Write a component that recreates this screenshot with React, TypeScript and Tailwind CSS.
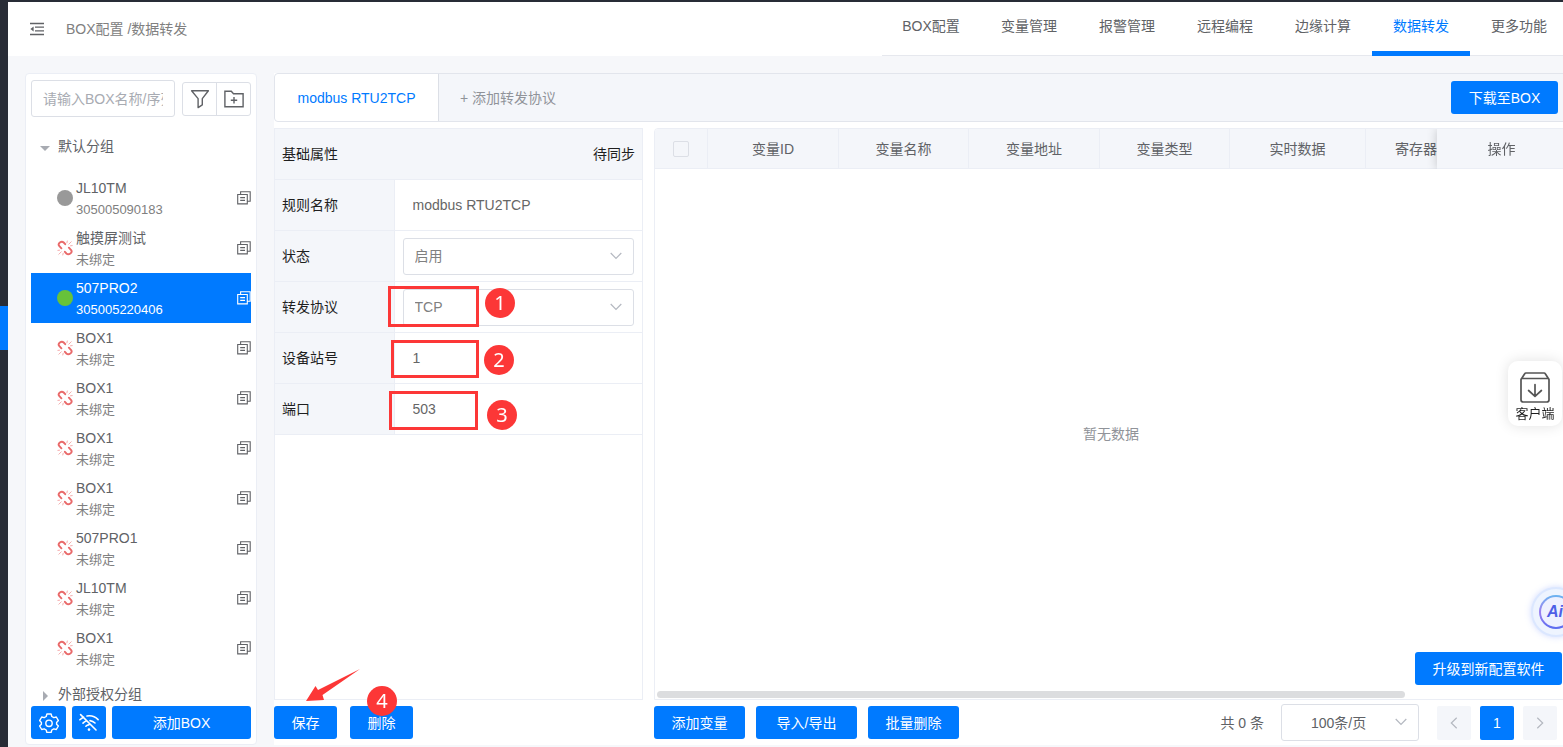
import React, { FunctionComponent, ReactNode } from "react";

const NAV_ITEMS = ["BOX配置", "变量管理", "报警管理", "远程编程", "边缘计算", "数据转发", "更多功能"];

type BoxStatus = "offline" | "online" | "unbound";

interface Box {
  name: string;
  code: string;
  status: BoxStatus;
}

const BOXES: Box[] = [
  { name: "JL10TM", code: "305005090183", status: "offline" },
  { name: "触摸屏测试", code: "未绑定", status: "unbound" },
  { name: "507PRO2", code: "305005220406", status: "online" },
  { name: "BOX1", code: "未绑定", status: "unbound" },
  { name: "BOX1", code: "未绑定", status: "unbound" },
  { name: "BOX1", code: "未绑定", status: "unbound" },
  { name: "BOX1", code: "未绑定", status: "unbound" },
  { name: "507PRO1", code: "未绑定", status: "unbound" },
  { name: "JL10TM", code: "未绑定", status: "unbound" },
  { name: "BOX1", code: "未绑定", status: "unbound" },
];

const FoldIcon = () => (
  <svg className="h-3.5 w-3.5" viewBox="0 0 14 14" fill="none" stroke="#606266" strokeWidth="1.3">
    <path d="M0 1.5h14M5 5.2h9M5 8.8h9M0 12.5h14" />
    <path d="M3.6 4.6v4.8L.4 7z" fill="#606266" stroke="none" />
  </svg>
);

const FilterIcon = () => (
  <svg className="h-5 w-5" viewBox="0 0 20 20" fill="none" stroke="#606266" strokeWidth="1.4" strokeLinejoin="round">
    <path d="M1.6 1.8h16.8L12.3 9.6v6.2l-4.2 2.8V9.6z" />
  </svg>
);

const FolderAddIcon = () => (
  <svg className="h-5 w-5" viewBox="0 0 20 20" fill="none" stroke="#606266" strokeWidth="1.4">
    <path d="M.9 2.3h6.4l2.2 2.4h9.6v13H.9zM10 8v6.4M6.8 11.2h6.4" />
  </svg>
);

const CopyIcon = ({ color }: { color: string }) => (
  <svg className="h-3.5 w-3.5" viewBox="0 0 14 14" fill="none" stroke={color} strokeWidth="1.1">
    <path d="M.7 3.5h9.6v9.4H.7zM3.6 3.4V.8h9.6v9.4h-2.8M3.2 6.6h4.8M3.2 9.4h4.8" />
  </svg>
);

const BrokenLinkIcon = () => (
  <svg className="h-4 w-4" viewBox="0 0 16 16" fill="none" stroke="#e96a6a" strokeLinecap="round">
    <path d="M8.2 4.2 6.700 2.500C4.400.300.300 3.400 2.200 6l2.200 2.300" strokeWidth="1.900" />
    <path d="M7.900 11.800l1.500 1.700c2.300 2.200 6.600-.9 4.700-3.500L11.900 7.700" strokeWidth="1.900" />
    <path d="M10.300 1 9.900 2.800M14.200 1.800l-2.400 2.400M15.200 5.600l-1.700.2M5.800 15l.4-1.800M1.900 14.200l2.400-2.400M.9 10.400l1.700-.2" stroke="#f3a3a3" strokeWidth=".9" />
  </svg>
);

const GearIcon = () => (
  <svg className="h-5 w-5" viewBox="0 0 20 20" fill="none" stroke="#fff" strokeWidth="1.4" strokeLinejoin="round">
    <path d="M7.900 1h4.200l.7 2.500 2 1.100 2.500-.6 2.100 3.600L17.600 9.400v1.800l1.800 1.800-2.100 3.500-2.500-.6-2 1.100-.7 2.500H7.900l-.7-2.500-2-1.100-2.500.6L.600 13l1.800-1.800V9.400L.600 7.600 2.700 4l2.500.6 2-1.100z" />
    <circle cx="10" cy="10.300" r="3.200" />
  </svg>
);

const WifiOffIcon = () => (
  <svg className="h-5 w-5" viewBox="0 0 20 20" fill="none" stroke="#fff" strokeWidth="1.6" strokeLinecap="round">
    <path d="M1.600 1.600 17 17M.9 6.800C2 5.700 3.300 4.800 4.600 4.200M8 3c4-.7 8.200.6 11.100 3.600M4 10.100c.9-.9 2-1.600 3.200-2M11 7.600c1.900.3 3.600 1.100 5 2.400M6.900 13.200c.8-.8 1.800-1.200 2.900-1.300" />
    <circle cx="10" cy="16.600" r="1.300" fill="#fff" stroke="none" />
  </svg>
);

const ClientIcon = () => (
  <svg className="h-8 w-8" viewBox="0 0 32 32" fill="none" stroke="#555" strokeWidth="1.700" strokeLinecap="round" strokeLinejoin="round">
    <path d="M2 7.500v20.200c0 1.600.8 2.300 2.300 2.300h23.400c1.600 0 2.300-.7 2.300-2.300V7.500L26.300 1.700c-.3-.5-.6-.7-1.200-.7H6.900c-.6 0-.9.200-1.200.7zM2.400 6.500h27.200M16 12.500V24M9.600 18.500 16 24.300l6.400-5.800" />
  </svg>
);

const Chevron = ({ d }: { d: string }) => (
  <svg className="h-3 w-3" viewBox="0 0 12 12" fill="none" stroke="#b4b8c0" strokeWidth="1.200">
    <path d={d} />
  </svg>
);

const CHEVRON_DOWN = "M.7 3 6 8.400 11.300 3";
const CHEVRON_LEFT = "M8.700.700 3.300 6l5.400 5.300";
const CHEVRON_RIGHT = "M3.300.700 8.700 6l-5.400 5.300";

const StatusIcon = ({ status }: { status: BoxStatus }) => {
  if (status === "unbound") return <BrokenLinkIcon />;
  return <span className={`h-4 w-4 rounded-full ${status === "online" ? "bg-[#67c23a]" : "bg-[#999]"}`} />;
};

const PrimaryButton = ({ children, className = "", label }: { children: ReactNode; className?: string; label?: string }) => (
  <button
    type="button"
    aria-label={label}
    className={`flex h-[33px] items-center justify-center rounded-[3px] bg-[#007aff] text-white ${className}`}
  >
    {children}
  </button>
);

const Header = () => (
  <header className="flex h-[54px] shrink-0 bg-white">
    <div className="flex items-center pl-[22px]">
      <button type="button" aria-label="收起菜单">
        <FoldIcon />
      </button>
      <span className="ml-[22px] text-[#808080]">BOX配置 /数据转发</span>
    </div>
    <nav className="-mr-[5px] ml-auto flex border-b border-[#e6e8ee]">
      {NAV_ITEMS.map((item) => {
        const active = item === "数据转发";
        return (
          <a
            key={item}
            href="#"
            className={`-mb-px flex w-[98px] shrink-0 justify-center border-b-[5px] pt-3.5 ${
              active ? "border-[#007aff] text-[#007aff]" : "border-transparent text-[#606266]"
            }`}
          >
            {item}
          </a>
        );
      })}
    </nav>
  </header>
);

const BoxRow: FunctionComponent<{ box: Box }> = ({ box }) => {
  const selected = box.status === "online";
  return (
    <li className={`flex h-[50px] items-center pl-[26px] ${selected ? "bg-[#007aff] text-white" : "text-[#606266]"}`}>
      <StatusIcon status={box.status} />
      <div className="ml-[3px] flex-1">
        <div className="leading-[22px]">{box.name}</div>
        <div className={`text-[13px] leading-[21px] ${selected ? "" : "text-[#808080]"}`}>{box.code}</div>
      </div>
      <button type="button" aria-label="复制">
        <CopyIcon color={selected ? "#fff" : "#606266"} />
      </button>
    </li>
  );
};

const Sidebar = () => (
  <aside className="flex w-[232px] shrink-0 flex-col rounded border border-[#ebeef5] bg-white px-[5px] pb-[5px]">
    <div className="mt-1.5 flex items-center justify-between">
      <input
        type="text"
        aria-label="搜索BOX"
        placeholder="请输入BOX名称/序列号"
        className="h-[37px] w-36 rounded-[3px] border border-[#dcdfe6] px-[11px] placeholder:text-[#a8abb2]"
      />
      <div className="flex h-[34px] rounded-[3px] border border-[#dcdfe6]">
        <button type="button" aria-label="筛选" className="flex w-[34px] items-center justify-center border-r border-[#dcdfe6]">
          <FilterIcon />
        </button>
        <button type="button" aria-label="新建分组" className="flex w-[33px] items-center justify-center">
          <FolderAddIcon />
        </button>
      </div>
    </div>
    <div className="min-h-0 flex-1 overflow-hidden">
      <div className="mt-[18px] flex h-[22px] items-center pl-[9px] text-[#606266]">
        <span className="mt-1 mr-2 border-x-[5px] border-t-[5px] border-x-transparent border-t-[#a8abb2]" />
        默认分组
      </div>
      <ul className="mt-4">
        {BOXES.map((box, index) => (
          <BoxRow key={index} box={box} />
        ))}
      </ul>
      <div className="mt-2.5 flex h-[22px] items-center pl-3 text-[#606266]">
        <span className="mt-1 mr-2.5 border-y-[5px] border-l-[5px] border-y-transparent border-l-[#a8abb2]" />
        外部授权分组
      </div>
    </div>
    <div className="flex gap-1.5">
      <PrimaryButton className="w-[35px]" label="设置">
        <GearIcon />
      </PrimaryButton>
      <PrimaryButton className="w-[34px]" label="离线">
        <WifiOffIcon />
      </PrimaryButton>
      <PrimaryButton className="flex-1">添加BOX</PrimaryButton>
    </div>
  </aside>
);

const SelectField = ({ id, value }: { id: string; value: string }) => (
  <div className="relative mx-2">
    <select id={id} className="h-[37px] w-full appearance-none rounded-[3px] border border-[#dcdfe6] bg-white px-[11px] text-[#808080]">
      <option>{value}</option>
    </select>
    <span className="pointer-events-none absolute top-3 right-3">
      <Chevron d={CHEVRON_DOWN} />
    </span>
  </div>
);

const TextField = ({ id, value }: { id: string; value: string }) => (
  <input id={id} type="text" defaultValue={value} className="h-9 w-full px-[18px] text-[#666]" />
);

const FIELDS = [
  { id: "rule-name", label: "规则名称", value: "modbus RTU2TCP", select: false },
  { id: "state", label: "状态", value: "启用", select: true },
  { id: "protocol", label: "转发协议", value: "TCP", select: true },
  { id: "station", label: "设备站号", value: "1", select: false },
  { id: "port", label: "端口", value: "503", select: false },
];

const PropertyPanel = () => (
  <div className="flex w-[369px] shrink-0 flex-col">
    <div className="flex-1 border border-[#ebeef5]">
      <div className="flex h-[50px] items-center justify-between bg-[#f4f6fa] px-[7px] text-[#1f1f1f]">
        <span>基础属性</span>
        <span>待同步</span>
      </div>
      <table className="w-full table-fixed border-collapse">
        <tbody>
          {FIELDS.map((field) => (
            <tr key={field.id} className="h-[51px] border-y border-[#ebeef5]">
              <th scope="row" className="w-[119px] border-r border-[#ebeef5] bg-[#f4f6fa] p-0 pl-[7px] text-left font-normal text-[#1f1f1f]">
                <label htmlFor={field.id}>{field.label}</label>
              </th>
              <td className="p-0">
                {field.select ? <SelectField id={field.id} value={field.value} /> : <TextField id={field.id} value={field.value} />}
              </td>
            </tr>
          ))}
        </tbody>
      </table>
    </div>
    <div className="mt-1.5 flex gap-[13px]">
      <PrimaryButton className="w-[63px]">保存</PrimaryButton>
      <PrimaryButton className="w-[63px]">删除</PrimaryButton>
    </div>
  </div>
);

const VariablePanel = () => (
  <div className="flex min-w-0 flex-1 flex-col">
    <div className="flex min-h-0 flex-1 flex-col overflow-hidden rounded-tl border border-[#ebeef5]">
      <div className="overflow-hidden">
        <table className="w-[1111px] table-fixed border-separate border-spacing-0 text-[#606266]">
          <thead>
            <tr className="h-10 bg-[#f4f6fa] *:border-r *:border-b *:border-[#ebeef5] *:p-0 *:font-normal">
              <th className="w-[53px]">
                <input
                  type="checkbox"
                  aria-label="全选"
                  className="mx-auto block h-4 w-4 appearance-none rounded-[2px] border border-[#dcdfe6]"
                />
              </th>
              <th className="w-[131px]">变量ID</th>
              <th className="w-[130px]">变量名称</th>
              <th className="w-[131px]">变量地址</th>
              <th className="w-[130px]">变量类型</th>
              <th className="w-[136px]">实时数据</th>
              <th className="w-[270px] text-left">
                <span className="pl-[29px]">寄存器</span>
              </th>
              <th className="sticky right-0 w-[130px] bg-[#f4f6fa] shadow-[0_0_10px_rgba(0,0,0,0.2)]">操作</th>
            </tr>
          </thead>
        </table>
      </div>
      <div className="flex flex-1 items-center justify-center pt-2 text-[#909399]">暂无数据</div>
      <div className="mb-px ml-0.5 h-[7px] w-[82%] rounded-full bg-[#dcdddf]" />
    </div>
    <div className="mt-1.5 flex h-[33px] items-center">
      <div className="flex gap-[11px]">
        <PrimaryButton className="w-[91px]">添加变量</PrimaryButton>
        <PrimaryButton className="w-[101px]">导入/导出</PrimaryButton>
        <PrimaryButton className="w-[91px]">批量删除</PrimaryButton>
      </div>
      <div className="mr-[11px] ml-auto flex items-center text-[#606266]">
        <span>共 0 条</span>
        <div className="relative ml-[17px]">
          <select aria-label="每页条数" className="h-[37px] w-[138px] appearance-none rounded-[3px] border border-[#dcdfe6] bg-white pl-[29px]">
            <option>100条/页</option>
          </select>
          <span className="pointer-events-none absolute top-3 right-3">
            <Chevron d={CHEVRON_DOWN} />
          </span>
        </div>
        <div className="ml-[18px] flex gap-[9px]">
          <button type="button" aria-label="上一页" className="flex h-[34px] w-[34px] items-center justify-center rounded-[2px] bg-[#f4f6fa]">
            <Chevron d={CHEVRON_LEFT} />
          </button>
          <button type="button" className="h-[34px] w-[34px] rounded-[2px] bg-[#007aff] text-white">
            1
          </button>
          <button type="button" aria-label="下一页" className="flex h-[34px] w-[34px] items-center justify-center rounded-[2px] bg-[#f4f6fa]">
            <Chevron d={CHEVRON_RIGHT} />
          </button>
        </div>
      </div>
    </div>
  </div>
);

const ForwardPanel = () => (
  <section className="-mr-[5px] flex min-w-0 flex-1 flex-col bg-white pb-1.5">
    <div className="flex h-[49px] shrink-0 items-center rounded-l border border-[#e2e5ec] bg-[#f4f6fa]">
      <button type="button" className="h-full w-[164px] rounded-l border-r border-[#dcdfe6] bg-white text-[#007aff]">
        modbus RTU2TCP
      </button>
      <button type="button" className="ml-[21px] text-[#909399]">
        + 添加转发协议
      </button>
      <PrimaryButton className="mr-[9px] ml-auto w-[107px]">下载至BOX</PrimaryButton>
    </div>
    <div className="mt-[6px] flex min-h-0 flex-1 gap-[11px]">
      <PropertyPanel />
      <VariablePanel />
    </div>
  </section>
);

// Guide marks drawn over the form: frames, numbered dots and the arrow
const GuideMarks = () => (
  <div className="pointer-events-none absolute inset-0 font-['Noto_Sans',sans-serif] text-xl text-white *:absolute">
    <div className="top-[286px] left-[388px] h-[41px] w-[91px] border-3 border-[#fc3737]" />
    <div className="top-[340px] left-[391px] h-[38px] w-[88px] border-3 border-[#fc3737]" />
    <div className="top-[391px] left-[389px] h-[39px] w-[89px] border-3 border-[#fc3737]" />
    <span className="top-[288px] left-[485px] h-[30px] w-[30px] rounded-full bg-[#fc3737] text-center leading-[30px]">1</span>
    <span className="top-[345px] left-[484px] h-[30px] w-[30px] rounded-full bg-[#fc3737] text-center leading-[30px]">2</span>
    <span className="top-[400px] left-[487px] h-[30px] w-[30px] rounded-full bg-[#fc3737] text-center leading-[30px]">3</span>
    <span className="bottom-[31px] left-[367px] h-[30px] w-[30px] rounded-full bg-[#fc3737] text-center leading-[30px]">4</span>
    <svg className="bottom-[45px] left-[306px] h-[33px] w-[55px]" viewBox="0 0 55 33" fill="#fc3737">
      <path d="M54 0 16.500 26l1.500 5L0 32l9.500-15 2.500 4z" />
    </svg>
  </div>
);

const FloatingActions = () => (
  <>
    <button
      type="button"
      className="absolute top-[361px] right-px flex h-[65px] w-[54px] flex-col items-center rounded-[10px] bg-white pt-[11px] text-[13px] leading-5 text-[#1f1f1f] shadow-[0_0_14px_rgba(0,0,0,0.12)]"
    >
      <ClientIcon />
      客户端
    </button>
    <button
      type="button"
      className="absolute -right-[18px] bottom-[110px] flex h-[50px] w-[50px] items-center justify-center rounded-full border-2 border-[#dbe7ff] bg-[#eef4ff] shadow-[0_0_6px_rgba(120,150,255,0.35)]"
    >
      <span className="flex h-[34px] w-[34px] rounded-full bg-linear-to-b from-[#69b4f0] via-[#9b7ff0] to-[#5a6cf0] p-0.5">
        <span className="flex flex-1 items-center rounded-full bg-[#eef1ff] pl-1.5 text-base font-bold text-[#4e5fe6] italic">Ai</span>
      </span>
    </button>
    <PrimaryButton className="absolute right-px bottom-[62px] w-[147px]">升级到新配置软件</PrimaryButton>
  </>
);

export default function App() {
  return (
    <div className="relative flex h-screen min-h-[740px] flex-col overflow-hidden bg-[#f6f7fa] font-['Liberation_Sans','Noto_Sans_CJK_SC',sans-serif] text-sm">
      <div className="h-0.5 shrink-0 bg-[#282c36]" />
      <div className="flex min-h-0 flex-1">
        <div className="w-2 shrink-0 bg-[#282c36] pt-[304px]">
          <div className="h-11 bg-[#007aff]" />
        </div>
        <div className="flex min-w-0 flex-1 flex-col">
          <Header />
          <main className="flex min-h-0 flex-1 gap-[17px] pt-[17px] pb-0.5 pl-[17px]">
            <Sidebar />
            <ForwardPanel />
          </main>
        </div>
      </div>
      <GuideMarks />
      <FloatingActions />
    </div>
  );
}
